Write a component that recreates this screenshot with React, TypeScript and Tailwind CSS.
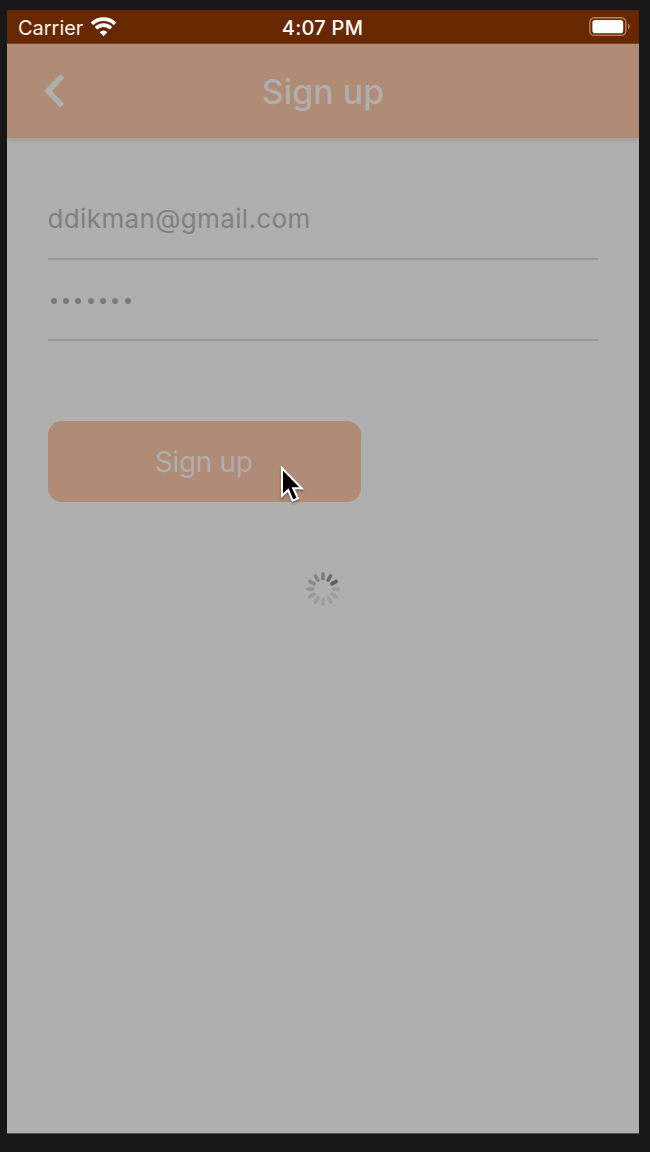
const spokes = [0.34, 0.46, 0.56, 0.11, 0.11, 0.11, 0.12, 0.13, 0.15, 0.19, 0.25, 0.29];

function Wifi() {
  return (
    <svg className="ml-[7px] h-[20px] w-[27px]" viewBox="0 0 27 20" fill="none" stroke="#fff">
      <path d="M2 6.8C8.2 0.6 18.8 0.6 25 6.8" strokeWidth="3.9" />
      <path d="M6 11.2C10.2 7.1 16.8 7.1 21 11.2" strokeWidth="3.6" />
      <path d="M13.5 19.3L9.6 15.2Q13.5 11.6 17.4 15.2Z" fill="#fff" stroke="none" />
    </svg>
  );
}

function Battery() {
  return (
    <svg className="mr-[9px] h-[20px] w-[41px]" viewBox="0 0 41 20">
      <rect x="0.8" y="0.8" width="36" height="17.6" rx="4.5" fill="none" stroke="#b48361" strokeWidth="1.4" />
      <rect x="3.4" y="3" width="30.8" height="13.2" rx="2.8" fill="#fff" />
      <path d="M39 6.6Q40.8 7.4 40.8 9.6T39 12.6Z" fill="#b48361" />
    </svg>
  );
}

function Spinner() {
  return (
    <svg className="h-[36px] w-[36px]" viewBox="-18 -18 36 36">
      {spokes.map((opacity, i) => (
        <rect key={i} x="-1.75" y="-17" width="3.5" height="8.5" rx="1.75" fill="#1c1c1c" fillOpacity={opacity} transform={`rotate(${i * 30})`} />
      ))}
    </svg>
  );
}

export default function App() {
  return (
    <div className="h-[1152px] w-[650px] overflow-hidden bg-[#171717] pl-[7px] pt-[10px] font-['Inter',sans-serif]">
      <div className="relative flex h-[1124px] w-[632px] flex-col border-b border-[#505050] bg-[#afafaf]">
        <div className="grid h-[34px] shrink-0 grid-cols-3 items-center border-b border-[#7d431d] bg-[#672800] text-white">
          <div className="flex items-center pl-[11px]">
            <span className="pt-[2px] text-[20px] leading-6 tracking-[-0.03px] text-[#fff2e9]">Carrier</span>
            <Wifi />
          </div>
          <span className="whitespace-nowrap pr-[1px] pt-[2px] text-center text-[20px] font-medium leading-6 tracking-[0.25px]">4:07 PM</span>
          <div className="flex justify-end">
            <Battery />
          </div>
        </div>
        <header className="grid h-[94px] shrink-0 grid-cols-[100px_1fr_100px] items-center bg-[#b08b75] shadow-[0_2px_4px_rgba(0,0,0,0.1)]">
          <svg className="ml-[35px] h-[36px] w-[24px]" viewBox="0 0 24 36" fill="none" stroke="#afafaf" strokeWidth="5.6">
            <path d="M20.2 3.4L6 18L20.2 32.6" />
          </svg>
          <h1 className="pt-[2px] text-center text-[34px] font-medium leading-[42px] text-[#afafaf]">Sign up</h1>
        </header>
        <main className="flex flex-col pl-[40.5px] pr-[41px]">
          <div className="mt-[41px] flex h-[81px] items-center border-b-2 border-[#999] text-[26px] text-[#808080]">
            <span className="pt-[1px] leading-8 tracking-[0.37px]">ddikman@gmail.com</span>
          </div>
          <div className="flex h-[81px] items-center gap-[6.4px] border-b-2 border-[#999] pl-[3px] pt-[3px]">
            {Array.from({ length: 7 }, (_, i) => (
              <span key={i} className="size-[6px] rounded-full bg-[#7c7c7c]" />
            ))}
          </div>
          <button className="mt-[80px] flex h-[81px] w-[313.5px] items-center justify-center rounded-[14px] bg-[#b08b75] pr-[1px] pt-[1px] text-[28px] tracking-[-0.35px] text-[#afafaf]">
            Sign up
          </button>
          <div className="mt-[69px] flex justify-center">
            <Spinner />
          </div>
        </main>
        <svg className="absolute left-[269px] top-[451px] h-[48px] w-[36px] drop-shadow-[0_2px_1px_rgba(0,0,0,0.3)]" viewBox="0 0 36 48">
          <path d="M6 7.2V34.8L12.2 29L16.6 39.6L21.8 37.3L17.2 27.2H25.7Z" fill="#000" stroke="#fff" strokeWidth="2" />
        </svg>
      </div>
    </div>
  );
}
